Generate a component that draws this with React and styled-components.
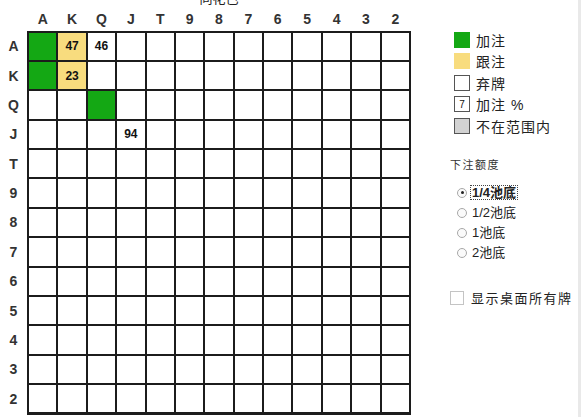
import React, { useState } from 'react';
import styled, { createGlobalStyle } from 'styled-components';

const GlobalStyle = createGlobalStyle`
  html, body {
    margin: 0;
    padding: 0;
    background: #fff;
    overflow: hidden;
  }
  body {
    font-family: "Liberation Sans", "Noto Sans CJK SC", sans-serif;
    color: #222;
  }
`;

const RANKS = ['A', 'K', 'Q', 'J', 'T', '9', '8', '7', '6', '5', '4', '3', '2'];

// 手牌范围: 单元格状态
const CELLS = {
  '0-0': { kind: 'raise' },
  '0-1': { kind: 'call', value: 47 },
  '0-2': { kind: 'fold', value: 46 },
  '1-0': { kind: 'raise' },
  '1-1': { kind: 'call', value: 23 },
  '2-2': { kind: 'raise' },
  '3-3': { kind: 'fold', value: 94 },
};

const COLORS = {
  raise: '#14a814',
  call: '#f8dc7e',
  fold: '#ffffff',
  out: '#d2d2d2',
};

const BETS = ['1/4池底', '1/2池底', '1池底', '2池底'];

export default function App() {
  const [bet, setBet] = useState(0);
  const [showAll, setShowAll] = useState(false);

  return (
    <Page>
      <GlobalStyle />
      <Board>
        <Title>同花色</Title>
        <ColHeader>
          {RANKS.map((r) => (
            <Label key={r}>{r}</Label>
          ))}
        </ColHeader>
        <BoardBody>
          <RowLabels>
            {RANKS.map((r) => (
              <Label key={r}>{r}</Label>
            ))}
          </RowLabels>
          <Grid>
            {RANKS.map((_, row) =>
              RANKS.map((__, col) => {
                const cell = CELLS[`${row}-${col}`];
                return (
                  <Cell key={`${row}-${col}`} $kind={cell ? cell.kind : 'fold'}>
                    {cell && cell.value}
                  </Cell>
                );
              })
            )}
          </Grid>
        </BoardBody>
      </Board>

      <Side>
        <Legend>
          <LegendItem>
            <Swatch $color={COLORS.raise} $plain />
            加注
          </LegendItem>
          <LegendItem>
            <Swatch $color={COLORS.call} $plain />
            跟注
          </LegendItem>
          <LegendItem>
            <Swatch $color={COLORS.fold} />
            弃牌
          </LegendItem>
          <LegendItem>
            <Swatch $color={COLORS.fold}>7</Swatch>
            加注 %
          </LegendItem>
          <LegendItem>
            <Swatch $color={COLORS.out} />
            不在范围内
          </LegendItem>
        </Legend>

        <SectionTitle>下注额度</SectionTitle>
        <RadioList>
          {BETS.map((b, i) => (
            <RadioRow key={b} onClick={() => setBet(i)}>
              <RadioDot $checked={bet === i} />
              <RadioText $active={bet === i}>{b}</RadioText>
            </RadioRow>
          ))}
        </RadioList>

        <CheckRow onClick={() => setShowAll(!showAll)}>
          <CheckBox $checked={showAll} />
          显示桌面所有牌
        </CheckRow>
      </Side>
    </Page>
  );
}

const Page = styled.div`
  display: flex;
  width: 581px;
  height: 417px;
  overflow: hidden;
`;

const Board = styled.div`
  display: flex;
  flex-direction: column;
  width: 412px;
  flex-shrink: 0;
`;

const Title = styled.div`
  height: 14px;
  margin-top: -8px;
  margin-left: 27px;
  width: 384px;
  text-align: center;
  font-size: 13px;
  line-height: 14px;
  color: #222;
`;

const ColHeader = styled.div`
  display: grid;
  grid-template-columns: repeat(13, 1fr);
  column-gap: 2px;
  width: 384px;
  box-sizing: border-box;
  padding: 2px 2px 0;
  margin-left: 27px;
  height: 24.5px;
  line-height: 22.5px;
`;

const Label = styled.div`
  display: flex;
  align-items: center;
  justify-content: center;
  font-size: 14px;
  font-weight: bold;
  color: #333;
`;

const BoardBody = styled.div`
  display: flex;
`;

const RowLabels = styled.div`
  display: grid;
  grid-template-rows: repeat(13, 1fr);
  row-gap: 2px;
  width: 27px;
  height: 384px;
  box-sizing: border-box;
  padding: 2px 0;
`;

const Grid = styled.div`
  display: grid;
  grid-template-columns: repeat(13, 1fr);
  grid-template-rows: repeat(13, 1fr);
  gap: 2px;
  padding: 2px;
  width: 384px;
  height: 384px;
  box-sizing: border-box;
  background: #1c1c1c;
`;

const Cell = styled.div`
  display: flex;
  align-items: center;
  justify-content: center;
  background: ${(p) => COLORS[p.$kind]};
  font-size: 12px;
  font-weight: bold;
  color: #111;
`;

const Side = styled.div`
  flex: 1;
  display: flex;
  flex-direction: column;
  padding-left: 38px;
  border-right: 3px solid #e9e9e9;
`;

const Legend = styled.div`
  display: flex;
  flex-direction: column;
  padding: 29px 0 0 4px;
`;

const LegendItem = styled.div`
  display: flex;
  align-items: center;
  gap: 6px;
  height: 21.5px;
  font-size: 14px;
  letter-spacing: 1px;
  color: #222;
`;

const Swatch = styled.div`
  width: 16px;
  height: 16px;
  box-sizing: border-box;
  background: ${(p) => p.$color};
  border: 1px solid ${(p) => (p.$plain ? p.$color : '#555')};
  display: flex;
  align-items: center;
  justify-content: center;
  font-size: 10px;
  letter-spacing: 0;
  color: #111;
`;

const SectionTitle = styled.div`
  margin-top: 21px;
  height: 14px;
  line-height: 14px;
  font-size: 11px;
  letter-spacing: 1.5px;
  color: #333;
`;

const RadioList = styled.div`
  display: flex;
  flex-direction: column;
  margin-top: 11px;
  padding-left: 7px;
`;

const RadioRow = styled.div`
  display: flex;
  align-items: center;
  gap: 4px;
  height: 20px;
  cursor: pointer;
`;

const RadioDot = styled.span`
  position: relative;
  width: 8px;
  height: 8px;
  border-radius: 50%;
  border: 1px solid #a8a8a8;
  background: #fafafa;
  flex-shrink: 0;
  &::after {
    content: '';
    display: ${(p) => (p.$checked ? 'block' : 'none')};
    position: absolute;
    left: 2.5px;
    top: 2.5px;
    width: 3px;
    height: 3px;
    border-radius: 50%;
    background: #222;
  }
`;

const RadioText = styled.span`
  font-size: 13px;
  line-height: 13px;
  padding: 0 1px;
  color: #222;
  font-weight: ${(p) => (p.$active ? 'bold' : 'normal')};
  outline: ${(p) => (p.$active ? '1px dotted #444' : 'none')};
  outline-offset: 0;
`;

const CheckRow = styled.div`
  display: flex;
  align-items: center;
  gap: 7px;
  margin-top: 25px;
  height: 20px;
  font-size: 13px;
  letter-spacing: 1.5px;
  white-space: nowrap;
  color: #222;
  cursor: pointer;
`;

const CheckBox = styled.span`
  width: 14px;
  height: 14px;
  box-sizing: border-box;
  border: 1px solid #c4c4c4;
  background: ${(p) => (p.$checked ? '#444' : '#fff')};
  flex-shrink: 0;
`;
